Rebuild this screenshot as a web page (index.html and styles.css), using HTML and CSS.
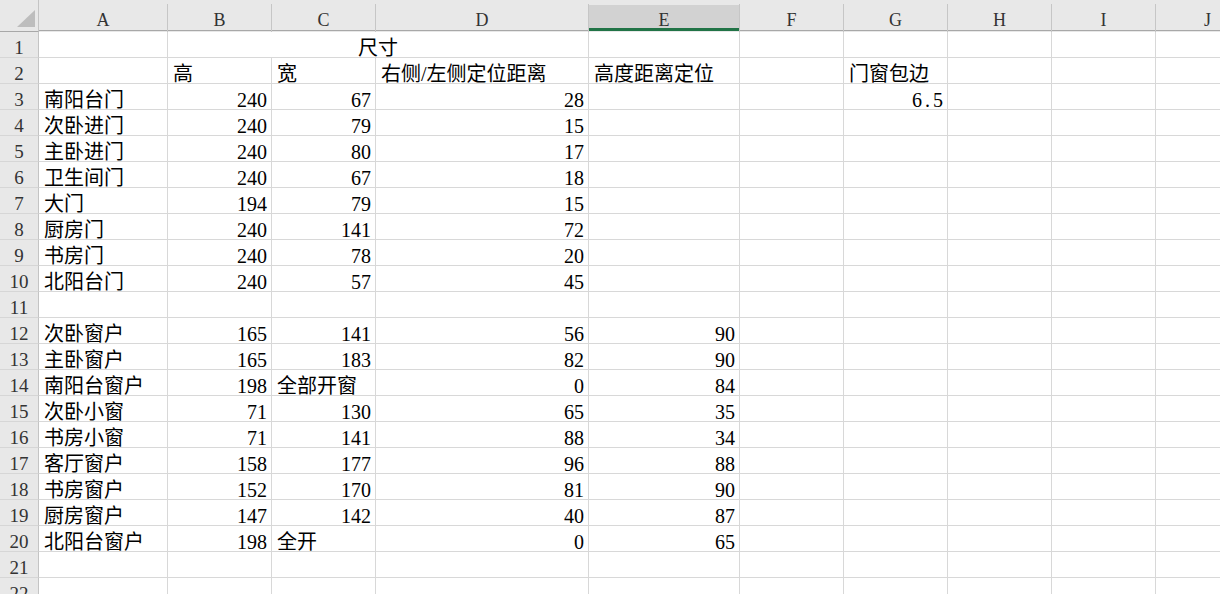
FILE: index.html
```html
<!DOCTYPE html>
<html lang="zh-CN">
<head>
<meta charset="utf-8">
<title>门窗尺寸</title>
<link rel="stylesheet" href="styles.css">
</head>
<body>
<div class="sheet">
  <div class="row head">
    <div class="corner"><svg width="38" height="31" viewBox="0 0 38 31"><polygon points="17,27 35,27 35,10" fill="#bdbdbd"/></svg></div>
    <div class="ch">A</div><div class="ch">B</div><div class="ch">C</div><div class="ch">D</div><div class="ch sel">E</div><div class="ch">F</div><div class="ch">G</div><div class="ch">H</div><div class="ch">I</div><div class="ch">J</div>
  </div>
  <div class="row">
    <div class="rh">1</div><div class="c"></div><div class="c merge">尺寸</div><div class="c"></div><div class="c"></div><div class="c"></div><div class="c"></div><div class="c"></div><div class="c"></div>
  </div>
  <div class="row">
    <div class="rh">2</div><div class="c"></div><div class="c">高</div><div class="c">宽</div><div class="c">右侧/左侧定位距离</div><div class="c">高度距离定位</div><div class="c"></div><div class="c">门窗包边</div><div class="c"></div><div class="c"></div><div class="c"></div>
  </div>
  <div class="row">
    <div class="rh">3</div><div class="c">南阳台门</div><div class="c n">240</div><div class="c n">67</div><div class="c n">28</div><div class="c"></div><div class="c"></div><div class="c n"><span class="wide">6.5</span></div><div class="c"></div><div class="c"></div><div class="c"></div>
  </div>
  <div class="row">
    <div class="rh">4</div><div class="c">次卧进门</div><div class="c n">240</div><div class="c n">79</div><div class="c n">15</div><div class="c"></div><div class="c"></div><div class="c"></div><div class="c"></div><div class="c"></div><div class="c"></div>
  </div>
  <div class="row">
    <div class="rh">5</div><div class="c">主卧进门</div><div class="c n">240</div><div class="c n">80</div><div class="c n">17</div><div class="c"></div><div class="c"></div><div class="c"></div><div class="c"></div><div class="c"></div><div class="c"></div>
  </div>
  <div class="row">
    <div class="rh">6</div><div class="c">卫生间门</div><div class="c n">240</div><div class="c n">67</div><div class="c n">18</div><div class="c"></div><div class="c"></div><div class="c"></div><div class="c"></div><div class="c"></div><div class="c"></div>
  </div>
  <div class="row">
    <div class="rh">7</div><div class="c">大门</div><div class="c n">194</div><div class="c n">79</div><div class="c n">15</div><div class="c"></div><div class="c"></div><div class="c"></div><div class="c"></div><div class="c"></div><div class="c"></div>
  </div>
  <div class="row">
    <div class="rh">8</div><div class="c">厨房门</div><div class="c n">240</div><div class="c n">141</div><div class="c n">72</div><div class="c"></div><div class="c"></div><div class="c"></div><div class="c"></div><div class="c"></div><div class="c"></div>
  </div>
  <div class="row">
    <div class="rh">9</div><div class="c">书房门</div><div class="c n">240</div><div class="c n">78</div><div class="c n">20</div><div class="c"></div><div class="c"></div><div class="c"></div><div class="c"></div><div class="c"></div><div class="c"></div>
  </div>
  <div class="row">
    <div class="rh">10</div><div class="c">北阳台门</div><div class="c n">240</div><div class="c n">57</div><div class="c n">45</div><div class="c"></div><div class="c"></div><div class="c"></div><div class="c"></div><div class="c"></div><div class="c"></div>
  </div>
  <div class="row">
    <div class="rh">11</div><div class="c"></div><div class="c"></div><div class="c"></div><div class="c"></div><div class="c"></div><div class="c"></div><div class="c"></div><div class="c"></div><div class="c"></div><div class="c"></div>
  </div>
  <div class="row">
    <div class="rh">12</div><div class="c">次卧窗户</div><div class="c n">165</div><div class="c n">141</div><div class="c n">56</div><div class="c n">90</div><div class="c"></div><div class="c"></div><div class="c"></div><div class="c"></div><div class="c"></div>
  </div>
  <div class="row">
    <div class="rh">13</div><div class="c">主卧窗户</div><div class="c n">165</div><div class="c n">183</div><div class="c n">82</div><div class="c n">90</div><div class="c"></div><div class="c"></div><div class="c"></div><div class="c"></div><div class="c"></div>
  </div>
  <div class="row">
    <div class="rh">14</div><div class="c">南阳台窗户</div><div class="c n">198</div><div class="c">全部开窗</div><div class="c n">0</div><div class="c n">84</div><div class="c"></div><div class="c"></div><div class="c"></div><div class="c"></div><div class="c"></div>
  </div>
  <div class="row">
    <div class="rh">15</div><div class="c">次卧小窗</div><div class="c n">71</div><div class="c n">130</div><div class="c n">65</div><div class="c n">35</div><div class="c"></div><div class="c"></div><div class="c"></div><div class="c"></div><div class="c"></div>
  </div>
  <div class="row">
    <div class="rh">16</div><div class="c">书房小窗</div><div class="c n">71</div><div class="c n">141</div><div class="c n">88</div><div class="c n">34</div><div class="c"></div><div class="c"></div><div class="c"></div><div class="c"></div><div class="c"></div>
  </div>
  <div class="row">
    <div class="rh">17</div><div class="c">客厅窗户</div><div class="c n">158</div><div class="c n">177</div><div class="c n">96</div><div class="c n">88</div><div class="c"></div><div class="c"></div><div class="c"></div><div class="c"></div><div class="c"></div>
  </div>
  <div class="row">
    <div class="rh">18</div><div class="c">书房窗户</div><div class="c n">152</div><div class="c n">170</div><div class="c n">81</div><div class="c n">90</div><div class="c"></div><div class="c"></div><div class="c"></div><div class="c"></div><div class="c"></div>
  </div>
  <div class="row">
    <div class="rh">19</div><div class="c">厨房窗户</div><div class="c n">147</div><div class="c n">142</div><div class="c n">40</div><div class="c n">87</div><div class="c"></div><div class="c"></div><div class="c"></div><div class="c"></div><div class="c"></div>
  </div>
  <div class="row">
    <div class="rh">20</div><div class="c">北阳台窗户</div><div class="c n">198</div><div class="c">全开</div><div class="c n">0</div><div class="c n">65</div><div class="c"></div><div class="c"></div><div class="c"></div><div class="c"></div><div class="c"></div>
  </div>
  <div class="row">
    <div class="rh">21</div><div class="c"></div><div class="c"></div><div class="c"></div><div class="c"></div><div class="c"></div><div class="c"></div><div class="c"></div><div class="c"></div><div class="c"></div><div class="c"></div>
  </div>
  <div class="row">
    <div class="rh">22</div><div class="c"></div><div class="c"></div><div class="c"></div><div class="c"></div><div class="c"></div><div class="c"></div><div class="c"></div><div class="c"></div><div class="c"></div><div class="c"></div>
  </div>
</div>
</body>
</html>
```

FILE: styles.css
```css
html, body {
  margin: 0;
  padding: 0;
  background: #ffffff;
  overflow: hidden;
  width: 1220px;
  height: 594px;
}

.sheet {
  width: 1260px;
  font-family: "Liberation Serif", "Noto Sans CJK SC", serif;
  color: #000;
}

.row {
  display: grid;
  grid-template-columns: 39px 129px 104px 104px 213px 151px 104px 104px 104px 104px 104px;
  height: 26px;
}

.row.head {
  height: 32px;
}

.row > div {
  box-sizing: border-box;
  white-space: nowrap;
  overflow: visible;
}

.corner {
  background: #e8e8e8;
  border-right: 1px solid #c4c4c4;
  border-bottom: 1px solid #a8a8a8;
  height: 32px;
}

.corner svg {
  display: block;
}

.ch {
  background: #e8e8e8;
  border-image: linear-gradient(to bottom, #e8e8e8 5px, #c6c6c6 5px) 1;
  border-image-width: 0 1px 0 0;
  border-style: solid;
  border-width: 0 1px 1px 0;
  box-shadow: inset 0 -1px 0 #a8a8a8;
  text-align: center;
  font-size: 18px;
  line-height: 19px;
  padding-top: 11px;
  color: #333;
  height: 32px;
}

.ch.sel {
  background: linear-gradient(to bottom, #e8e8e8 5px, #d2d2d2 5px);
  box-shadow: inset 0 -3px 0 #217346;
  color: #333;
}

.rh {
  background: #e8e8e8;
  border-right: 1px solid #c4c4c4;
  border-bottom: 1px solid #d6d6d6;
  text-align: center;
  font-size: 19px;
  line-height: 18px;
  padding-top: 7px;
  color: #333;
}

.c {
  border-right: 1px solid #d8d8d8;
  border-bottom: 1px solid #d8d8d8;
  font-size: 20px;
  line-height: 18px;
  padding: 7px 4px 0 5px;
}

.c.n {
  text-align: right;
}

.c.merge {
  grid-column: span 3;
  text-align: center;
  padding-left: 0;
  padding-right: 0;
}

.wide {
  letter-spacing: 3px;
  margin-right: -3px;
}
```
